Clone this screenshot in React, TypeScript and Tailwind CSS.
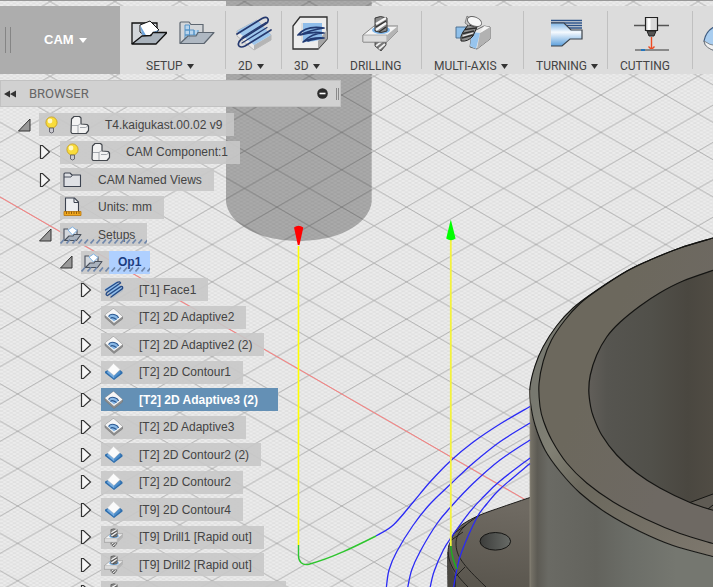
import React from "react";
import { clsx } from "clsx";

type Point = [number, number];

// Catmull-Rom through the points, written as cubic beziers
function smooth(points: Point[]) {
    let d = `M${points[0][0]} ${points[0][1]}`;
    for (let i = 0; i < points.length - 1; i++) {
        const p0 = points[i - 1] || points[i];
        const p1 = points[i];
        const p2 = points[i + 1];
        const p3 = points[i + 2] || p2;
        d += `C${p1[0] + (p2[0] - p0[0]) / 6} ${p1[1] + (p2[1] - p0[1]) / 6} ${p2[0] - (p3[0] - p1[0]) / 6} ${p2[1] - (p3[1] - p1[1]) / 6} ${p2[0]} ${p2[1]}`;
    }
    return d;
}

const outerRim: Point[] = [[713, 238], [680, 248], [650, 260], [627, 271], [597, 290], [573, 308], [556.5, 326], [543, 347], [535, 366], [530, 387], [530.5, 403], [535, 425], [545, 450], [560, 471.5], [580, 493], [606.5, 513], [640, 531.5], [673, 545.5], [713, 556.5]];
const topFace: Point[] = [[713, 238], [680, 248], [650, 260], [627, 271], [597, 290.5], [580, 303.5], [565, 320], [551.5, 340], [543.3, 361], [539, 384], [540, 406.5], [543.5, 421], [551.7, 440], [566.7, 463], [586.7, 483], [613.3, 502], [646.7, 519.5], [680, 533.5], [713, 543.5]];
const bore: Point[] = [[713, 270.3], [683, 281], [660, 292.7], [640, 306], [620, 322.3], [606.7, 337], [596.7, 355], [590.3, 375], [588.8, 391], [590.7, 407], [593.5, 417], [601.7, 435], [616.7, 455], [636.7, 473], [660, 488], [690, 502.5], [713, 510.3]];
const baseEdge: Point[] = [[530, 497.5], [503, 506.7], [480, 515], [463, 524], [455, 532], [450.7, 541], [448, 552], [448, 587]];

const passes: Point[][] = [
    [[376, 536], [393.3, 525], [413.3, 502], [430, 482], [450.7, 460.7], [473.3, 442], [500, 424], [530, 406.5]],
    [[386.3, 588], [389, 570], [396.7, 551.7], [413.3, 525], [430, 504], [450.7, 484], [473.3, 463], [500, 441.7], [530, 423]],
    [[407.6, 588], [411.7, 570], [420, 551.7], [436.7, 524], [450.7, 507], [473.3, 483.3], [500, 460], [530, 440]],
    [[430, 588], [434, 571.7], [443.3, 550], [451.7, 536.7], [470, 511.7], [483.3, 497], [500, 481], [530, 458]],
    [[453.5, 588], [456.7, 570], [461.7, 551.7], [476.7, 518], [486.7, 504], [500, 489], [530, 463.5]],
];

function Viewport() {
    return (
        <svg className="absolute inset-0 h-full w-full" viewBox="0 0 713 587" preserveAspectRatio="xMinYMin slice" fill="none" aria-hidden="true">
            <defs>
                <pattern id="minor" x="309.3" y="113.7" width="6.48" height="3.74" patternUnits="userSpaceOnUse">
                    <path d="M0 0L6.48 3.74M0 3.74L6.48 0" stroke="#9a9a9a" strokeOpacity=".22" strokeWidth=".7" />
                </pattern>
                <pattern id="major" x="309.3" y="113.7" width="64.8" height="37.36" patternUnits="userSpaceOnUse">
                    <path d="M0 0L64.8 37.36M0 37.36L64.8 0" stroke="#8a8a8a" strokeOpacity=".62" strokeWidth=".9" />
                </pattern>
                <linearGradient id="wall" x1="530" x2="713" y1="0" y2="0" gradientUnits="userSpaceOnUse">
                    <stop offset="0" stopColor="#79756a" />
                    <stop offset=".04" stopColor="#5d5b54" />
                    <stop offset=".1" stopColor="#6a6a64" />
                    <stop offset=".36" stopColor="#63635d" />
                    <stop offset=".55" stopColor="#6c6e68" />
                    <stop offset=".8" stopColor="#757770" />
                    <stop offset="1" stopColor="#757770" />
                </linearGradient>
                <linearGradient id="bevel" x1="530" x2="713" y1="400" y2="550" gradientUnits="userSpaceOnUse">
                    <stop offset="0" stopColor="#77786f" />
                    <stop offset=".2" stopColor="#818074" />
                    <stop offset=".4" stopColor="#6b685d" />
                    <stop offset="1" stopColor="#7d776d" />
                </linearGradient>
                <linearGradient id="face" x1="560" x2="660" y1="450" y2="490" gradientUnits="userSpaceOnUse">
                    <stop offset="0" stopColor="#6c685d" />
                    <stop offset="1" stopColor="#6e6963" />
                </linearGradient>
                <linearGradient id="inside" x1="588" x2="713" y1="0" y2="0" gradientUnits="userSpaceOnUse">
                    <stop offset="0" stopColor="#625f5a" />
                    <stop offset=".15" stopColor="#565550" />
                    <stop offset=".5" stopColor="#51504a" />
                    <stop offset=".8" stopColor="#4a4740" />
                    <stop offset="1" stopColor="#504c44" />
                </linearGradient>
                <linearGradient id="base" x1="500" x2="490" y1="505" y2="587" gradientUnits="userSpaceOnUse">
                    <stop offset="0" stopColor="#6f6a62" />
                    <stop offset="1" stopColor="#5a564e" />
                </linearGradient>
                <linearGradient id="pin" x1="480" x2="511" y1="0" y2="0" gradientUnits="userSpaceOnUse">
                    <stop offset="0" stopColor="#3c3d3b" />
                    <stop offset="1" stopColor="#686b67" />
                </linearGradient>
            </defs>

            <rect width="713" height="587" fill="#ececec" />
            <rect width="713" height="587" fill="url(#minor)" />
            <rect width="713" height="587" fill="url(#major)" />
            <path d="M0 197L530 502.5" stroke="#ff7d7d" strokeWidth="1" />

            {/* tool */}
            <path d="M226 0V202A73 42 0 0 0 371.700 202V0Z" fill="#000" fillOpacity=".28" />

            {/* part */}
            <path d={smooth(baseEdge) + "H530Z"} fill="url(#base)" />
            <path d={smooth(baseEdge)} stroke="#1c1b19" />
            <path d="M448 555C450 566 453 571 456 577V587H448Z" fill="#4a4741" />
            <path d="M448 552C449 563 453 572 468 587M480 515C465 524 456 533 456 543C456 556 462 564 486 587M455 577L465 567M455 576V587M450 541L463 532M453 534L466 525" stroke="#1c1b19" strokeWidth=".9" />
            <ellipse cx="495.300" cy="541.300" rx="15.300" ry="8.800" fill="url(#pin)" stroke="#151513" />
            <path d={smooth(outerRim) + "V587H530V387Z"} fill="url(#wall)" />
            <path d={smooth(outerRim) + "V238Z"} fill="url(#bevel)" />
            <path d={smooth(topFace) + "Z"} fill="url(#face)" />
            <path d={smooth(bore) + "Z"} fill="url(#inside)" />
            <path d="M690 502.500L713 494V510.300Z" fill="#5f5b54" />
            <path d="M690 502.500L713 494M708 509L713 505" stroke="#151513" />
            <path d={smooth(outerRim)} stroke="#151513" strokeWidth="1.100" />
            <path d={smooth(topFace)} stroke="#151513" strokeWidth="1.100" />
            <path d={smooth(bore)} stroke="#151513" strokeWidth="1.200" />
            <path d="M530 390V587" stroke="#8b867a" strokeWidth=".8" />

            {/* toolpath */}
            {passes.map((points, i) => (
                <path key={i} d={smooth(points)} stroke="#2a2af5" strokeWidth="1.300" />
            ))}
            <path d="M298.500 246V545" stroke="#ffff00" strokeWidth="1.600" />
            <path d="M450.800 238V546" stroke="#f4f23c" strokeWidth="1.800" />
            <path d="M298.500 545V556C298.500 561 302 566 309 564.200C332 558 354 547 376 536" stroke="#2ec52e" strokeWidth="1.400" />
            <path d="M450.800 546C451.500 555 453.500 562 457 569" stroke="#1fae1f" strokeWidth="1.500" />
            <path d="M294 227.500Q298.500 224 303.300 227.500L299.500 245H297.800Z" fill="#ff0000" />
            <path d="M450.800 219.500L455.600 238.500Q451 242 446.200 238.500Z" fill="#00ff00" />
        </svg>
    );
}

/* ---------- toolbar icons ---------- */

function SetupIcon() {
    return (
        <svg width="36" height="28" viewBox="0 0 36 28" fill="none" aria-hidden="true">
            <path d="M1 25V4H26V15" fill="#d3d6da" stroke="#111" strokeWidth="1.300" />
            <path d="M9 6L19 2L28 11L16 18L9 13Z" fill="#fff" stroke="#111" />
            <path d="M9 6L16 18L11 15.500Z" fill="#6fa5dc" />
            <path d="M28 11L24 15L22 13Z" fill="#6fa5dc" />
            <path d="M1 25L11 17L20 16.500L22 13.500H36L25 25Z" fill="#a9b2bb" stroke="#111" strokeWidth="1.300" strokeLinejoin="round" />
        </svg>
    );
}

function SetupFolderIcon() {
    return (
        <svg width="36" height="28" viewBox="0 0 36 28" fill="none" aria-hidden="true">
            <path d="M1 24V4Q1 3 2 3H10L12 5.500H24V13" fill="#d3d6d9" stroke="#5d6670" strokeWidth="1.200" />
            <path d="M6 6H10.500V11H6ZM6 11H10.500V16H6ZM10.500 11H15V16H10.500ZM6 16H10.500V20H6ZM15 11V16H19V11" fill="#b9d5ed" stroke="#5795c8" />
            <path d="M1 24.500L9 17H17L19 13.500H35L25 24.500Z" fill="#a7b2bd" fillOpacity=".85" stroke="#5d6670" strokeWidth="1.200" strokeLinejoin="round" />
        </svg>
    );
}

function Milling2dIcon() {
    return (
        <svg width="36" height="36" viewBox="0 0 36 36" fill="none" aria-hidden="true">
            <path d="M1 16L21 5L35 20V25L18 35L1 21Z" fill="#e9e9e9" stroke="#9a9a9a" strokeWidth=".6" />
            <path d="M18 30V35L35 25V20Z" fill="#b5b5b5" />
            <path d="M1 16L21 5L35 20L18 30Z" fill="#9dc6ec" />
            <path d="M1 19L26 3.500Q31 1 32 4Q33 7 29.500 9L5 24.500Q1 28 3 31Q5 33 9 31L35 15" stroke="#25396f" strokeWidth="1.700" strokeLinecap="round" />
            <path d="M6 22.500L30 7.500M6 28L31 12.500" stroke="#25396f" strokeWidth="1.200" strokeLinecap="round" />
        </svg>
    );
}

function Milling3dIcon() {
    return (
        <svg width="36" height="36" viewBox="0 0 36 36" fill="none" aria-hidden="true">
            <path d="M1 34V11L8 2H35V24L26 34Z" fill="#ededed" stroke="#2f2f2f" strokeWidth="1.300" />
            <path d="M26 34V26L35 15V24Z" fill="#a6a6a6" />
            <path d="M11 8H30V24Q22 27 11 27Z" fill="#8fbdea" />
            <path d="M10 8V26" stroke="#cfcfcf" />
            <path d="M6 20Q14 10 32 13Q18 15 8 20Q20 16 32 18Q20 18 11 27Q20 22 32 23Q22 24 16 26" stroke="#223a72" strokeWidth="1.700" strokeLinecap="round" strokeLinejoin="round" />
        </svg>
    );
}

function DrillingIcon({ size = 36 }: { size?: number }) {
    return (
        <svg width={size} height={size} viewBox="0 0 36 36" fill="none" aria-hidden="true">
            <path d="M13 22H24V30L19 36L13 31Z" fill="#777" stroke="#333" strokeWidth=".8" />
            <path d="M14 31L23 24M17 34L23 29" stroke="#eee" strokeWidth="1.800" />
            <path d="M1 20L12 11H36V16L25 27H1Z" fill="#f4f4f4" stroke="#777" strokeWidth=".9" />
            <path d="M1 20H25V27H1Z" fill="#ddd" stroke="#888" strokeWidth=".6" />
            <path d="M25 20L36 11V16L25 27Z" fill="#b4b4b4" />
            <ellipse cx="19" cy="15" rx="9" ry="4" fill="#7db5ea" />
            <path d="M13 3Q18 0 25 3V16Q19 19 13 16Z" fill="#8b8b8b" stroke="#2c2c2c" strokeWidth=".9" />
            <path d="M14 9L24 3M14 15L24 8" stroke="#f6f6f6" strokeWidth="2.200" />
            <path d="M14 12L24 6M17 17L24 12" stroke="#2f2f2f" strokeWidth="1.300" />
        </svg>
    );
}

function MultiAxisIcon() {
    return (
        <svg width="36" height="36" viewBox="0 0 36 36" fill="none" aria-hidden="true">
            <path d="M1 12H14V23H1Z" fill="#8fc0ea" stroke="#45698b" strokeWidth=".9" />
            <path d="M17 17L29 11L35 12V24L22 34L15 32Z" fill="#e8e8e8" stroke="#555" strokeWidth=".9" />
            <path d="M17 17L25 18L21 34L15 31Z" fill="#97c4ed" />
            <path d="M25 18L35 12V24L22 34Z" fill="#b2b2b2" />
            <path d="M25 18L29 11L35 12Z" fill="#f4f4f4" />
            <path d="M13 10L22 12L18 21Q13 27 6 26Q5 21 8 17Z" fill="#8d8d8d" stroke="#222" />
            <path d="M8 18.500L19 16M7 23L18 20M10 14.500L21 13" stroke="#2c2c2c" strokeWidth="1.500" />
            <path d="M8 21L18 18" stroke="#eee" strokeWidth="1.300" />
            <path d="M12 1L10 8L14 11L17 5Z" fill="#c6c6c6" stroke="#666" strokeWidth=".7" />
            <ellipse cx="19.500" cy="6.500" rx="7.500" ry="4.500" transform="rotate(22 19.500 6.500)" fill="#f6f6f6" stroke="#666" strokeWidth=".9" />
        </svg>
    );
}

function TurningIcon() {
    return (
        <svg width="36" height="36" viewBox="0 0 36 36" fill="none" aria-hidden="true">
            <defs>
                <linearGradient id="bar" x1="0" x2="0" y1="0" y2="1">
                    <stop offset="0" stopColor="#7fb5e6" />
                    <stop offset=".4" stopColor="#f6fafe" />
                    <stop offset="1" stopColor="#5b9fdc" />
                </linearGradient>
            </defs>
            <path d="M3 5.500H34M3 8H34M18 10.500H34M21 13H34" stroke="#2c5389" strokeWidth="1.300" />
            <path d="M3 8H16L23 15H34V24H22L14 31H3Z" fill="url(#bar)" />
            <path d="M3 8H16L23 15H34V24H22L14 31H3" stroke="#3d434a" strokeWidth="1.200" />
        </svg>
    );
}

function CuttingIcon() {
    return (
        <svg width="36" height="36" viewBox="0 0 36 36" fill="none" aria-hidden="true">
            <path d="M1 10.500H36" stroke="#555" strokeWidth="1.300" />
            <path d="M12.500 2.500H24.500V15.500H12.500Z" fill="#d9d9d9" stroke="#222" strokeWidth="1.200" />
            <path d="M16 3.500V15" stroke="#fff" strokeWidth="3" />
            <path d="M14 16H23L21 21H16Z" fill="#555" stroke="#222" />
            <path d="M18.500 22V34M15.500 31.500L18.500 34.500L21.500 31.500" stroke="#ee4a22" strokeWidth="1.400" />
            <path d="M2 35H36" stroke="#8a8a8a" strokeWidth="2" />
            <path d="M8 35H12" stroke="#2576bd" strokeWidth="2" />
        </svg>
    );
}

function ProbeIcon() {
    return (
        <svg width="36" height="36" viewBox="0 0 36 36" fill="none" aria-hidden="true">
            <path d="M1 26Q3 15 13 11L34 20V36H14Q2 33 1 26Z" fill="#a9cdef" stroke="#3f5c80" strokeWidth="1.200" />
            <path d="M1 26Q6 30 14 31V36Q2 34 1 26Z" fill="#f1f1f1" stroke="#666" strokeWidth=".7" />
        </svg>
    );
}

/* ---------- tree icons ---------- */

function BulbIcon() {
    return (
        <svg className="shrink-0" width="20" height="20" viewBox="0 0 20 20" fill="none" aria-hidden="true">
            <circle cx="9.500" cy="7.500" r="5.600" fill="#f9dc3c" stroke="#c49a1c" strokeWidth=".8" />
            <circle cx="8" cy="6" r="2.400" fill="#fff8c9" />
            <path d="M7.500 13H11.500V17Q9.500 19 7.500 17Z" fill="#c9c9cf" stroke="#5c5c66" strokeWidth=".9" />
        </svg>
    );
}

function ComponentIcon() {
    return (
        <svg className="shrink-0" width="20" height="20" viewBox="0 0 20 20" fill="none" aria-hidden="true">
            <path d="M1.500 4L4 1.500H9.500L11 3V9L17 9.500L18.500 11V15.500L16 18.500H2L1 17Z" fill="#f2f2f2" stroke="#43474d" strokeWidth="1.200" strokeLinejoin="round" />
            <path d="M2 10.500H8L10.500 8.500M8 10.500V18M10 12.500H15.500L18 11" stroke="#8e939a" strokeWidth=".8" />
        </svg>
    );
}

function FolderIcon() {
    return (
        <svg className="shrink-0" width="20" height="20" viewBox="0 0 20 20" fill="none" aria-hidden="true">
            <path d="M1 16.500V4Q1 3 2 3H7L9 5H17.500V16.500Z" fill="#dfe1e5" stroke="#3c4350" strokeWidth="1.100" strokeLinejoin="round" />
            <path d="M1 7H8L9.500 5" stroke="#3c4350" strokeWidth=".9" />
        </svg>
    );
}

function UnitsIcon() {
    return (
        <svg className="shrink-0" width="20" height="20" viewBox="0 0 20 20" fill="none" aria-hidden="true">
            <path d="M2.500 15V1H11.500L15.500 5V15" fill="#eceef1" stroke="#3c4350" strokeWidth="1.100" />
            <path d="M11 1V5.500H15.500" stroke="#3c4350" />
            <path d="M1 14.500H18V18.500H1Z" fill="#f0a81e" stroke="#b87308" strokeWidth=".8" />
            <path d="M3.500 14.500V17M6 14.500V17M8.500 14.500V17M11 14.500V17M13.500 14.500V17M16 14.500V17" stroke="#7d4c05" strokeWidth=".8" />
        </svg>
    );
}

function SetupsIcon() {
    return (
        <svg className="shrink-0" width="20" height="20" viewBox="0 0 20 20" fill="none" aria-hidden="true">
            <path d="M1 15.500V4H14V12L10 15.500Z" fill="#d4d8dd" />
            <path d="M1 15.500V4H5M14 4.500V10" stroke="#4a515c" strokeWidth="1.100" />
            <path d="M5 5L9.500 2L14 5.500L9.500 10Z" fill="#fff" stroke="#7fb1e2" />
            <path d="M1.500 15.500L6 11H10L11 9.500H18L13.500 15.500Z" fill="#aab3be" stroke="#4a515c" strokeWidth="1.100" strokeLinejoin="round" />
        </svg>
    );
}

function AdaptiveIcon() {
    return (
        <svg className="shrink-0" width="20" height="20" viewBox="0 0 20 20" fill="none" aria-hidden="true">
            <path d="M1 8L9.500 1.500L18.500 9.500V12L10 18.500L1 10.500Z" fill="#8d8d8d" stroke="#777" strokeWidth=".6" />
            <path d="M1 8L9.500 1.500L18.500 9.500L10 16Z" fill="#f6f6f6" />
            <path d="M4.500 10Q5 7 9.500 7Q14 7.500 14.500 11L10 14.500Z" fill="#88b8e6" />
            <path d="M4.500 9.500Q6 6.500 10 7.500Q14 8.500 14.500 11M6.500 11.500Q8 9.500 12.500 12.500" stroke="#2d588f" strokeWidth="1.200" />
        </svg>
    );
}

function ContourIcon() {
    return (
        <svg className="shrink-0" width="20" height="20" viewBox="0 0 20 20" fill="none" aria-hidden="true">
            <path d="M1 9.500L4 8L10 13L16 8L18.500 10V11.500L10 18L1 11Z" fill="#2f6fae" />
            <path d="M4 8.500L10 13.500V16.500L3 10.500Z" fill="#76acdf" />
            <path d="M16 8.500L10 13.500V16.500L16.500 11Z" fill="#4f8fcb" />
            <path d="M3.500 8L9.500 1.500L16 7.500L10 13.500Z" fill="#fbfbfb" stroke="#d5d5d5" strokeWidth=".5" />
        </svg>
    );
}

function SmallDrillIcon() {
    return (
        <span className="flex w-5 shrink-0 justify-start">
            <DrillingIcon size={19} />
        </span>
    );
}

function FaceIcon() {
    return (
        <svg className="shrink-0" width="20" height="20" viewBox="0 0 20 20" fill="none" aria-hidden="true">
            <path d="M1 10L12 2L19 9V11L9 18L1 12Z" fill="#b9bfc6" />
            <path d="M1 9L12 2L19 9L9 16Z" fill="#8fbdea" />
            <path d="M1.500 10L13 2.500Q16 1 16.500 3L3 12.500Q1 15 3.500 15.500L17 6.500Q19 6 18.500 8.500L7 17" stroke="#254a86" strokeWidth="1.400" strokeLinecap="round" />
        </svg>
    );
}

/* ---------- toolbar ---------- */

type Tool = { name: string; label?: string; icons: React.ReactNode; width: string; menu?: boolean; indent?: string };

const tools: Tool[] = [
    { name: "Setup", label: "SETUP", icons: <><SetupIcon /><SetupFolderIcon /></>, width: "w-[106px]", menu: true, indent: "pl-[26px]" },
    { name: "2D", label: "2D", icons: <Milling2dIcon />, width: "w-14", menu: true },
    { name: "3D", label: "3D", icons: <Milling3dIcon />, width: "w-14", menu: true },
    { name: "Drilling", label: "DRILLING", icons: <DrillingIcon />, width: "w-[84px]" },
    { name: "Multi-axis", label: "MULTI-AXIS", icons: <MultiAxisIcon />, width: "w-[102px]", menu: true },
    { name: "Turning", label: "TURNING", icons: <TurningIcon />, width: "w-[84px]", menu: true },
    { name: "Cutting", label: "CUTTING", icons: <CuttingIcon />, width: "w-[85px]" },
    { name: "Probing", icons: <ProbeIcon />, width: "w-14" },
];

function Toolbar() {
    return (
        <header className="relative mt-1.5 flex h-[68px] shrink-0 overflow-hidden bg-[#dcdcdc]">
            <button className="relative flex w-[120px] shrink-0 items-center bg-[#adadad] pl-11 text-[13px] font-bold text-white">
                <span className="absolute left-[5px] h-[26px] w-1.5 border-x border-[#858585]" />
                CAM
                <svg className="ml-[5px]" width="8" height="5" viewBox="0 0 8 5" aria-hidden="true">
                    <path d="M0 0H8L4 5Z" fill="#fff" />
                </svg>
            </button>
            {tools.map((tool) => (
                <button key={tool.name} aria-label={tool.name} className={clsx("relative flex shrink-0 flex-col", tool.width)}>
                    <span className="flex h-[54px] w-full items-center justify-center gap-3">{tool.icons}</span>
                    {tool.label && (
                        <span className={clsx("flex h-3 items-center gap-1 font-[Roboto,sans-serif] text-xs leading-3 whitespace-nowrap text-[#444]", tool.indent || "pl-3")}>
                            {tool.label}
                            {tool.menu && (
                                <svg width="7" height="5" viewBox="0 0 7 5" aria-hidden="true">
                                    <path d="M0 0H7L3.500 5Z" fill="#333" />
                                </svg>
                            )}
                        </span>
                    )}
                    <span className="absolute top-[5px] right-0 h-[58px] w-px bg-[#c0c0c0]" />
                </button>
            ))}
        </header>
    );
}

/* ---------- browser tree ---------- */

type Node = {
    label: string;
    level: 0 | 1 | 2 | 3;
    icon: React.ReactNode;
    arrow?: "open" | "closed";
    bulb?: boolean;
    selected?: boolean;
    active?: boolean;
    pending?: boolean;
};

const nodes: Node[] = [
    { label: "T4.kaigukast.00.02 v9", level: 0, icon: <ComponentIcon />, arrow: "open", bulb: true },
    { label: "CAM Component:1", level: 1, icon: <ComponentIcon />, arrow: "closed", bulb: true },
    { label: "CAM Named Views", level: 1, icon: <FolderIcon />, arrow: "closed" },
    { label: "Units: mm", level: 1, icon: <UnitsIcon /> },
    { label: "Setups", level: 1, icon: <SetupsIcon />, arrow: "open", pending: true },
    { label: "Op1", level: 2, icon: <SetupsIcon />, arrow: "open", active: true, pending: true },
    { label: "[T1] Face1", level: 3, icon: <FaceIcon />, arrow: "closed" },
    { label: "[T2] 2D Adaptive2", level: 3, icon: <AdaptiveIcon />, arrow: "closed" },
    { label: "[T2] 2D Adaptive2 (2)", level: 3, icon: <AdaptiveIcon />, arrow: "closed" },
    { label: "[T2] 2D Contour1", level: 3, icon: <ContourIcon />, arrow: "closed" },
    { label: "[T2] 2D Adaptive3 (2)", level: 3, icon: <AdaptiveIcon />, arrow: "closed", selected: true },
    { label: "[T2] 2D Adaptive3", level: 3, icon: <AdaptiveIcon />, arrow: "closed" },
    { label: "[T2] 2D Contour2 (2)", level: 3, icon: <ContourIcon />, arrow: "closed" },
    { label: "[T2] 2D Contour2", level: 3, icon: <ContourIcon />, arrow: "closed" },
    { label: "[T9] 2D Contour4", level: 3, icon: <ContourIcon />, arrow: "closed" },
    { label: "[T9] Drill1 [Rapid out]", level: 3, icon: <SmallDrillIcon />, arrow: "closed" },
    { label: "[T9] Drill2 [Rapid out]", level: 3, icon: <SmallDrillIcon />, arrow: "closed" },
    { label: "[T9] Drill3 [Chip breaking]", level: 3, icon: <SmallDrillIcon />, arrow: "closed" },
];

const indents = ["pl-[18px]", "pl-[39px]", "pl-[60px]", "pl-20"];

function Arrow({ state }: { state: "open" | "closed" }) {
    return (
        <svg width="13" height="16" viewBox="0 0 13 16" fill="none" aria-hidden="true">
            {state === "open" ? (
                <path d="M12 2V14H0.500Z" fill="#999" stroke="#333" />
            ) : (
                <path d="M1.500 1.500H3.500L10.500 8L3.500 14.500H1.500Z" fill="#f6f6f6" stroke="#333" strokeWidth="1.200" />
            )}
        </svg>
    );
}

// slanted dashes under nodes that still have work pending
function Hatch({ id }: { id: string }) {
    return (
        <svg className="absolute bottom-0.5 left-0 h-[5px] w-full" aria-hidden="true">
            <defs>
                <pattern id={id} width="6" height="5" patternUnits="userSpaceOnUse">
                    <path d="M0.500 4.500L4 0.500" stroke="#6f87ab" strokeWidth="1.700" />
                </pattern>
            </defs>
            <rect width="100%" height="5" fill={`url(#${id})`} />
        </svg>
    );
}

function TreeRow({ node }: { node: Node }) {
    return (
        <li className={clsx("flex items-center", indents[node.level])}>
            <span className="flex w-[21px] shrink-0">
                {node.arrow && (
                    <button aria-label={`Toggle ${node.label}`}>
                        <Arrow state={node.arrow} />
                    </button>
                )}
            </span>
            <button
                className={clsx(
                    "relative flex h-[23px] items-center pl-[3px] whitespace-nowrap",
                    node.selected ? "bg-[#6490b5] pr-5 font-bold text-white" : "bg-[#c8c8c8]/90 text-[#444]",
                    !node.active && !node.selected && "pr-3"
                )}
            >
                {node.bulb && <span className="mr-2"><BulbIcon /></span>}
                {node.icon}
                {node.active ? (
                    <span className="ml-[5px] flex h-full items-center bg-[#afd0ff] px-[9px] font-bold text-[#1c3c80]">{node.label}</span>
                ) : (
                    <span className="ml-[15px]">{node.label}</span>
                )}
                {node.pending && <Hatch id={`hatch-${node.level}`} />}
            </button>
        </li>
    );
}

function Browser() {
    return (
        <nav className="relative mt-1.5 w-[341px] shrink-0" aria-label="Browser">
            <div className="flex h-[27px] items-center border border-[#c2c2c2] bg-[#d1d1d1] pl-[3px] text-[#666]">
                <button aria-label="Collapse browser">
                    <svg width="12" height="8" viewBox="0 0 12 8" aria-hidden="true">
                        <path d="M6 0.500V7.500L0 4ZM12 0.500V7.500L6 4Z" fill="#333" />
                    </svg>
                </button>
                <h2 className="ml-[13px] font-[Roboto,sans-serif] text-[13px]">BROWSER</h2>
                <button className="ml-auto" aria-label="Hide browser">
                    <svg width="11" height="11" viewBox="0 0 11 11" aria-hidden="true">
                        <circle cx="5.500" cy="5.500" r="5.300" fill="#2c2c2c" />
                        <path d="M2.500 5.500H8.500" stroke="#fff" strokeWidth="1.600" />
                    </svg>
                </button>
                <span className="mr-px ml-2 h-3 w-[3px] border-x border-[#8a8a8a]" />
            </div>
            <ul className="mt-1 grid h-[495px] auto-rows-fr">
                {nodes.map((node) => (
                    <TreeRow key={node.label} node={node} />
                ))}
            </ul>
        </nav>
    );
}

export default function App() {
    return (
        <main className="relative flex h-screen flex-col overflow-hidden bg-[#ececec] font-['Liberation_Sans',Arial,sans-serif] text-xs">
            <Viewport />
            <div className="absolute inset-x-0 top-0 h-px bg-[#989898]" />
            <Toolbar />
            <Browser />
        </main>
    );
}
